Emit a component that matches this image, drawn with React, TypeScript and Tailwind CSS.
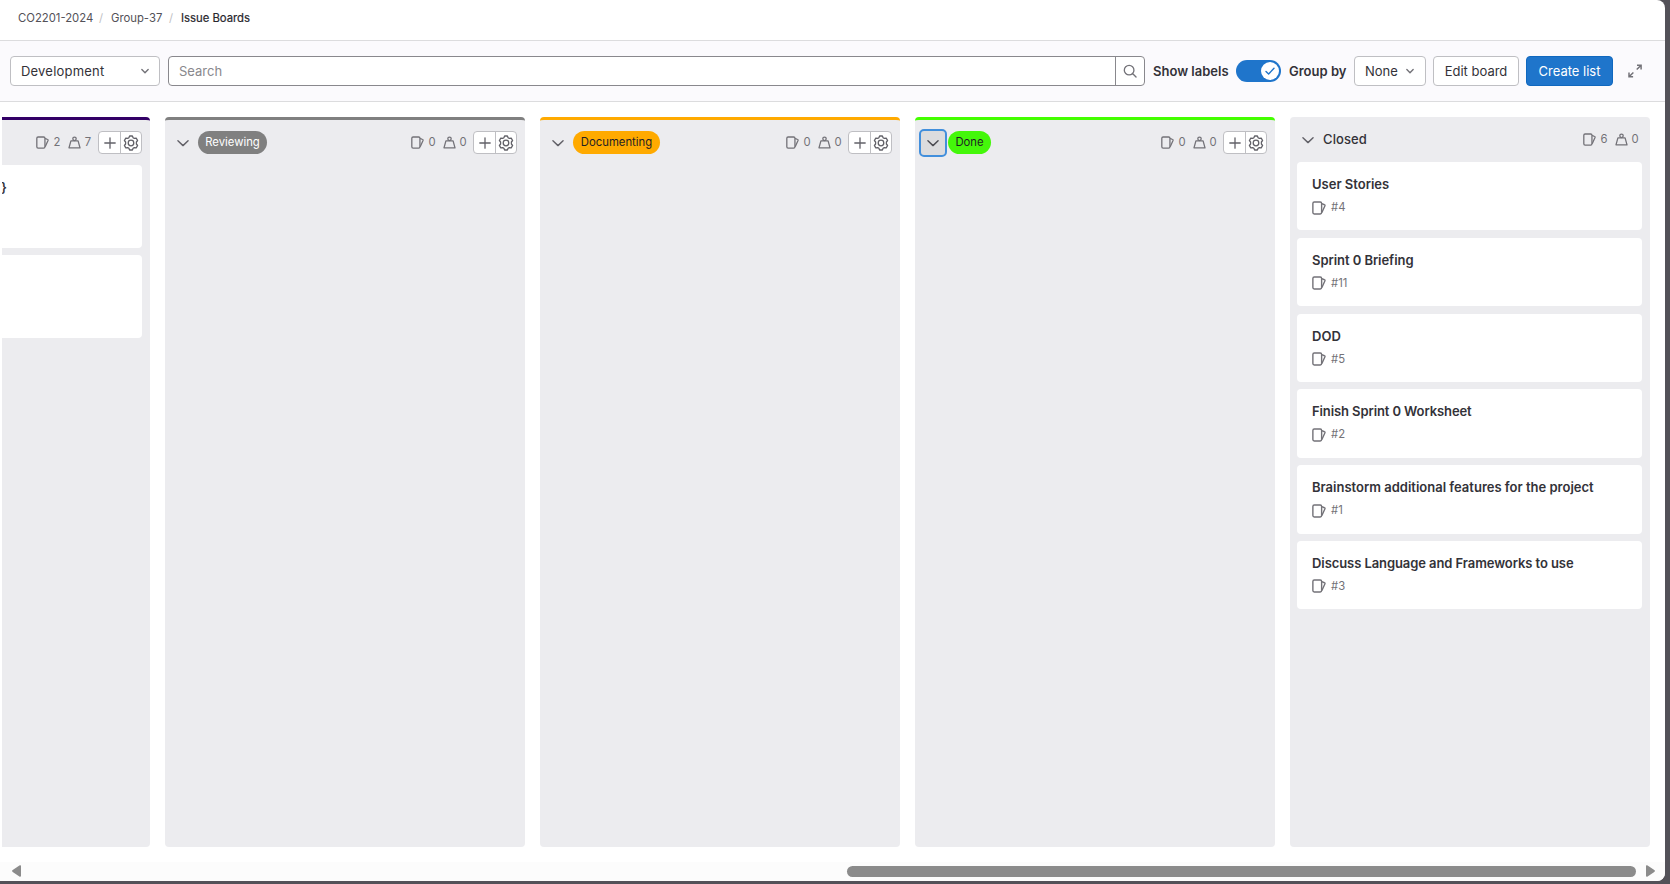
import React from "react";

type IconProps = { className?: string };

const ChevronIcon = ({ className = "" }: IconProps) => (
  <svg viewBox="0 0 16 16" fill="none" stroke="currentColor" strokeLinecap="round" strokeLinejoin="round" className={className}>
    <path d="M2.2 5.400 8 11l5.800-5.600" strokeWidth="1.600" />
  </svg>
);

const SmallChevronIcon = ({ className = "" }: IconProps) => (
  <svg viewBox="0 0 16 16" fill="none" stroke="currentColor" strokeLinecap="round" strokeLinejoin="round" className={className}>
    <path d="M4.4 6.4 8 9.9l3.6-3.5" strokeWidth="1.6" />
  </svg>
);

const IssueIcon = ({ className = "" }: IconProps) => (
  <svg viewBox="0 0 16 16" fill="none" stroke="currentColor" strokeWidth="1.600" strokeLinejoin="round" className={className}>
    <rect x="1" y="1.200" width="10" height="13.600" rx="1.600" />
    <path d="M11.200 3l3 1.300c.6.2.8.7.6 1.200L11.300 13.200" />
  </svg>
);

const WeightIcon = ({ className = "" }: IconProps) => (
  <svg viewBox="0 0 16 16" fill="none" stroke="currentColor" strokeWidth="1.600" strokeLinejoin="round" className={className}>
    <path d="M3.600 6h8.800l2.400 8.600H1.200z" />
    <circle cx="8" cy="3.500" r="2.100" />
  </svg>
);

const GearIcon = ({ className = "" }: IconProps) => (
  <svg viewBox="0 0 16 16" fill="none" stroke="currentColor" strokeWidth="1.300" strokeLinejoin="round" className={className}>
    <path d="M6.600 1h2.800l.7 1.700 1.200.7 1.900-.3 1.400 2.400-1.200 1.500v2l1.200 1.500-1.400 2.400-1.900-.3-1.200.7-.7 1.700H6.600l-.7-1.700-1.200-.7-1.900.3-1.400-2.400L2.600 9V7L1.400 5.500l1.400-2.400 1.900.3 1.200-.7z" />
    <circle cx="8" cy="8" r="2.800" />
  </svg>
);

const Counts = ({ issues, weight }: { issues: number; weight: number }) => (
  <div className="flex items-center text-[11.3px] leading-none text-[#737278]">
    <IssueIcon className="h-[13px] w-[13px]" />
    <span className="ml-[4px] flex w-[8px] justify-center">{issues}</span>
    <WeightIcon className="ml-[7px] h-[13px] w-[13px]" />
    <span className="ml-[3px] flex w-[8px] justify-center">{weight}</span>
  </div>
);

const Actions = () => (
  <div className="ml-[6px] flex h-[23px] w-[44px] overflow-hidden rounded-[4px] border border-[#bfbfc3] bg-white text-[#626168]">
    <button className="flex w-[22px] items-center justify-center border-r border-[#bfbfc3]">
      <svg viewBox="0 0 12 12" className="h-[12px] w-[12px]" stroke="currentColor" strokeWidth="1.3" strokeLinecap="round">
        <path d="M6 .8v10.400M.8 6h10.400" />
      </svg>
    </button>
    <button className="flex flex-1 items-center justify-center">
      <GearIcon className="h-[16px] w-[16px] shrink-0" />
    </button>
  </div>
);

type ColumnProps = {
  label: string;
  border: string;
  pill: string;
  focused?: boolean;
};

const Column = ({ label, border, pill, focused }: ColumnProps) => (
  <section className={`h-[730px] w-[360px] shrink-0 rounded-[4px] border-t-[3px] bg-[#ececef] ${border}`}>
    <header className="flex h-[45px] items-center pl-[4px] pr-[8px]">
      <button
        className={`mr-[1px] flex h-[28px] w-[28px] items-center justify-center rounded-[5px] ${
          focused ? "border-2 border-[#428fdc] bg-[#dcdcde] text-[#4c4b51]" : "text-[#626168]"
        }`}
      >
        <ChevronIcon className="h-[14px] w-[14px] shrink-0" />
      </button>
      <span className={`flex h-[23px] items-center justify-center rounded-full text-[11.3px] ${pill}`}>{label}</span>
      <div className="ml-auto flex items-center">
        <Counts issues={0} weight={0} />
        <Actions />
      </div>
    </header>
  </section>
);

const closedIssues = [
  { title: "User Stories", id: "#4", spacing: "tracking-[0px]" },
  { title: "Sprint 0 Briefing", id: "#11", spacing: "tracking-[-0.06px]" },
  { title: "DOD", id: "#5", spacing: "tracking-[0px]" },
  { title: "Finish Sprint 0 Worksheet", id: "#2", spacing: "tracking-[-0.1px]" },
  { title: "Brainstorm additional features for the project", id: "#1", spacing: "tracking-[0px]" },
  { title: "Discuss Language and Frameworks to use", id: "#3", spacing: "tracking-[-0.08px]" },
];

export default function App() {
  return (
    <div className="h-[884px] w-[1670px] overflow-hidden bg-[#535158] font-['Inter',sans-serif] text-[#333238]">
      <div className="flex h-[881px] w-[1665px] flex-col overflow-hidden rounded-r-[8px] bg-white">
        <nav className="flex h-[41px] shrink-0 items-center border-b border-[#dcdcde] pb-[2px] pl-[18px] text-[11.3px] leading-none text-[#535158]">
          <span className="w-[81px] whitespace-nowrap">CO2201-2024</span>
          <span className="w-[12px] text-[#bfbfc3]">/</span>
          <span className="w-[58px] whitespace-nowrap">Group-37</span>
          <span className="w-[12px] text-[#bfbfc3]">/</span>
          <span className="whitespace-nowrap text-[#28272d] [-webkit-text-stroke:0.2px]">Issue Boards</span>
        </nav>

        <div className="flex h-[61px] shrink-0 items-center border-b border-[#dcdcde] bg-[#fbfafd] pl-[10px] text-[13px] leading-none">
          <button className="flex h-[30px] w-[150px] items-center justify-between rounded-[4px] border border-[#bfbfc3] bg-white pl-[10px] pr-[7px]">
            <span className="tracking-[0.2px]">Development</span>
            <SmallChevronIcon className="h-[14px] w-[14px] text-[#737278]" />
          </button>
          <div className="ml-[8px] flex h-[30px] w-[977px] overflow-hidden rounded-[4px] border border-[#89888d] bg-white">
            <span className="flex flex-1 items-center pl-[10px] text-[#89888d]">Search</span>
            <span className="flex w-[29px] items-center justify-center border-l border-[#89888d] text-[#737278]">
              <svg viewBox="0 0 16 16" className="h-[14px] w-[14px]" fill="none" stroke="currentColor" strokeWidth="1.5" strokeLinecap="round">
                <circle cx="7" cy="7" r="5.500" />
                <path d="m11.200 11.200 3.700 3.700" />
              </svg>
            </span>
          </div>
          <span className="ml-[8px] w-[83px] whitespace-nowrap font-semibold">Show labels</span>
          <span className="flex h-[22px] w-[45px] items-center justify-end rounded-full bg-[#1f75cb] pr-[2px]">
            <span className="flex h-[18px] w-[18px] items-center justify-center rounded-full bg-white text-[#1f75cb]">
              <svg viewBox="0 0 12 12" className="h-[12px] w-[12px]" fill="none" stroke="currentColor" strokeWidth="1.400" strokeLinecap="round" strokeLinejoin="round">
                <path d="m2 6.600 2.600 2.500L10 3.300" />
              </svg>
            </span>
          </span>
          <span className="ml-[8px] w-[65px] whitespace-nowrap font-semibold">Group by</span>
          <button className="flex h-[30px] w-[72px] items-center justify-between rounded-[4px] border border-[#bfbfc3] bg-white pl-[10px] pr-[8px]">
            None
            <SmallChevronIcon className="h-[14px] w-[14px] text-[#737278]" />
          </button>
          <button className="ml-[7px] h-[30px] w-[86px] whitespace-nowrap rounded-[4px] border border-[#bfbfc3] bg-white">Edit board</button>
          <button className="ml-[7px] h-[30px] w-[87px] whitespace-nowrap rounded-[4px] border border-[#1068bf] bg-[#1f75cb] text-white">Create list</button>
          <svg viewBox="0 0 14 14" className="ml-[15px] h-[14px] w-[14px] text-[#737278]" fill="none" stroke="currentColor" strokeWidth="1.500">
            <path d="M9 1.200h4.100v4.200M13.100 1.200 8.700 5.500M5.100 12.800H1V8.600M1 12.800l4.400-4.300" />
          </svg>
        </div>

        <main className="flex h-[757px] shrink-0 gap-[15px] pl-[2px] pt-[15px]">
          <section className="h-[730px] w-[148px] shrink-0 rounded-r-[4px] border-t-[3px] border-[#330066] bg-[#ececef]">
            <header className="flex h-[45px] items-center justify-end pr-[8px]">
              <Counts issues={2} weight={7} />
              <Actions />
            </header>
            <div className="flex flex-col gap-[7px] pr-[8px]">
              <article className="h-[83px] overflow-hidden rounded-r-[4px] bg-white pt-[14px] text-[13px] font-semibold leading-[16px]">
                <span className="-ml-[1px]">{"}"}</span>
              </article>
              <article className="h-[83px] rounded-r-[4px] bg-white" />
            </div>
          </section>

          <Column label="Reviewing" border="border-[#808080]" pill="w-[69px] bg-[#808080] text-white" />
          <Column label="Documenting" border="border-[#ffaa00]" pill="w-[87px] bg-[#ffaa00] text-[#1f1e24]" />
          <Column label="Done" border="border-[#44ff00]" pill="w-[43px] bg-[#44f70a] text-[#1f1e24]" focused />

          <section className="h-[730px] w-[360px] shrink-0 rounded-[4px] bg-[#ececef]">
            <header className="flex h-[45px] items-center pl-[11px] pr-[11px]">
              <ChevronIcon className="h-[14px] w-[14px] text-[#626168]" />
              <h2 className="ml-[8px] text-[13px] font-medium leading-none tracking-[0.1px]">Closed</h2>
              <div className="ml-auto">
                <Counts issues={6} weight={0} />
              </div>
            </header>
            <div className="flex flex-col gap-[7.4px] pl-[7px] pr-[8px]">
              {closedIssues.map((issue) => (
                <article key={issue.id} className="h-[68.4px] rounded-[4px] bg-white pl-[15px] pt-[14px]">
                  <h3 className={`whitespace-nowrap text-[13px] font-semibold leading-[17px] ${issue.spacing}`}>{issue.title}</h3>
                  <div className="mt-[7px] flex items-center text-[11.3px] leading-[15px] text-[#737278]">
                    <IssueIcon className="h-[14px] w-[14px]" />
                    <span className="ml-[5px]">{issue.id}</span>
                  </div>
                </article>
              ))}
            </div>
          </section>
        </main>

        <div className="mt-[3px] flex flex-1 items-center bg-[#fcfcfc] pb-[1px] pl-[12px] pr-[10px]">
          <svg viewBox="0 0 9 12" className="h-[12px] w-[9px] fill-[#8b8b8b]">
            <path d="M9 1.200v9.600a1 1 0 0 1-1.600.8L.7 6.900a1 1 0 0 1 0-1.800L7.400.4A1 1 0 0 1 9 1.200z" />
          </svg>
          <div className="ml-auto h-[11px] w-[789px] rounded-full bg-[#8b8b8b]" />
          <svg viewBox="0 0 9 12" className="ml-[10px] h-[12px] w-[9px] fill-[#8b8b8b]">
            <path d="M0 1.200v9.600a1 1 0 0 0 1.600.8l6.700-4.700a1 1 0 0 0 0-1.800L1.600.4A1 1 0 0 0 0 1.200z" />
          </svg>
        </div>
      </div>
    </div>
  );
}
